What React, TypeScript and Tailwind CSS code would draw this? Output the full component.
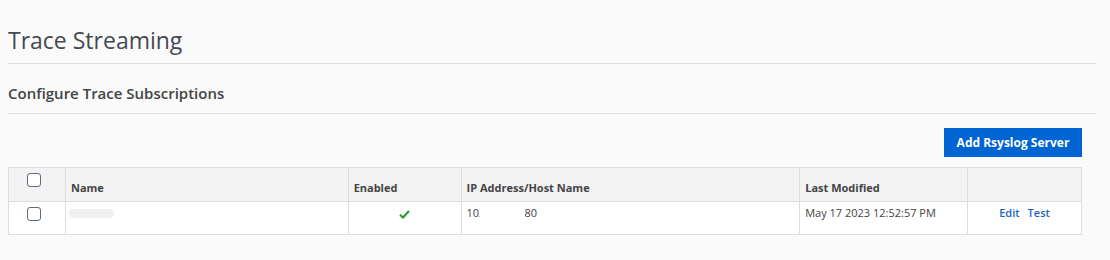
import React from "react"

const font = { fontFamily: '"Open Sans", "Liberation Sans", sans-serif' }

function Box() {
  return <span className="inline-block h-[14px] w-[14px] rounded-[3px] border border-[#5b6b80] bg-white" />
}

function Check() {
  return (
    <svg width="11" height="9" viewBox="0 0 11 9" className="inline-block">
      <path d="M1 4.8 L4 7.5 L10 1" fill="none" stroke="#1f9e2a" strokeWidth="2" />
    </svg>
  )
}

export default function App() {
  return (
    <div className="min-h-[260px] w-[1110px] bg-[#fafafa] px-2 text-[#444]" style={font}>
      <div className="pr-[6px]">
        <h1 className="pt-6 pb-[7px] text-[23px] font-medium leading-8 text-[#454a52]">Trace Streaming</h1>
        <div className="h-px bg-[#e0e0e0]" />
        <h2 className="pt-[19px] pb-[10px] text-[15px] font-semibold leading-5">Configure Trace Subscriptions</h2>
        <div className="h-px bg-[#e0e0e0]" />
      </div>

      <div className="flex w-[1074px] justify-end pt-[14px] pb-[10px]">
        <button className="h-[29px] w-[138px] bg-[#0064d2] text-[12px] font-bold text-white">Add Rsyslog Server</button>
      </div>

      <table className="w-[1074px] border-collapse bg-white text-[11px]">
        <colgroup>
          <col className="w-[57px]" />
          <col className="w-[283px]" />
          <col className="w-[113px]" />
          <col className="w-[339px]" />
          <col className="w-[168px]" />
          <col className="w-[114px]" />
        </colgroup>
        <thead>
          <tr className="h-[34px] bg-[#f3f3f3]">
            <th className="border border-[#ddd] pt-[5px] align-top"><div className="pl-[18px] text-left"><Box /></div></th>
            <th className="border border-[#ddd] px-[5px] pt-[12px] text-left align-top font-bold">Name</th>
            <th className="border border-[#ddd] px-[5px] pt-[12px] text-left align-top font-bold">Enabled</th>
            <th className="border border-[#ddd] px-[5px] pt-[12px] text-left align-top font-bold">IP Address/Host Name</th>
            <th className="border border-[#ddd] px-[5px] pt-[12px] text-left align-top font-bold">Last Modified</th>
            <th className="border border-[#ddd]" />
          </tr>
        </thead>
        <tbody>
          <tr className="h-[33px]">
            <td className="border border-[#ddd] pt-[5px] align-top"><div className="pl-[18px]"><Box /></div></td>
            <td className="border border-[#ddd] px-[3px] pt-[7px] align-top">
              <span className="block h-[9px] w-[45px] rounded-full bg-[#f0f0f0]" />
            </td>
            <td className="border border-[#ddd] pt-[3px] text-center align-top"><Check /></td>
            <td className="border border-[#ddd] px-[5px] pt-[3px] align-top">
              <span className="relative inline-block">
                <span>102</span>
                <span className="inline-block w-[39px]" />
                <span>80</span>
                <span className="absolute top-0 left-[13px] h-full w-[43px] bg-white" />
              </span>
            </td>
            <td className="border border-[#ddd] px-[5px] pt-[3px] align-top">May 17 2023 12:52:57 PM</td>
            <td className="border border-[#ddd] pt-[3px] text-center align-top">
              <span className="font-semibold text-[#1a66c2]">Edit</span>
              <span className="ml-[8px] font-semibold text-[#1a66c2]">Test</span>
            </td>
          </tr>
        </tbody>
      </table>
    </div>
  )
}
